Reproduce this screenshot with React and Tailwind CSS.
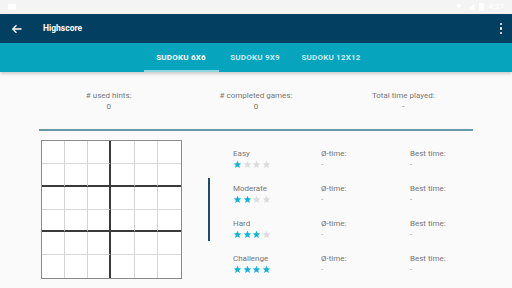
import React from "react";

const STATS = [
  { label: "# used hints:", value: "0" },
  { label: "# completed games:", value: "0" },
  { label: "Total time played:", value: "-" },
];

const LEVELS = [
  { name: "Easy", stars: 1 },
  { name: "Moderate", stars: 2 },
  { name: "Hard", stars: 3 },
  { name: "Challenge", stars: 4 },
];

function Star({ on }) {
  return (
    <svg width="9" height="9" viewBox="0 0 24 24">
      <path
        d="M12 2l2.9 6.9 7.1.6-5.4 4.7 1.6 7.1L12 17.5 5.8 21.3l1.6-7.1L2 9.5l7.1-.6z"
        fill={on ? "#12b4d4" : "#dcdcdc"}
      />
    </svg>
  );
}

function Board() {
  const cells = [];
  for (let r = 0; r < 6; r++) {
    for (let c = 0; c < 6; c++) {
      const right =
        c === 2
          ? "border-r-[2px] border-r-[#3a3a3a]"
          : c < 5
          ? "border-r border-r-[#d4d4d4]"
          : "";
      const bottom =
        r === 1 || r === 3
          ? "border-b-[2px] border-b-[#3a3a3a]"
          : r < 5
          ? "border-b border-b-[#d8d8d8]"
          : "";
      cells.push(<div key={`${r}-${c}`} className={`${right} ${bottom}`} />);
    }
  }
  return (
    <div className="grid h-[139px] w-[141px] shrink-0 grid-cols-6 grid-rows-6 border border-[#8a8a8a] bg-white">
      {cells}
    </div>
  );
}

export default function App() {
  return (
    <div
      className="flex h-[288px] w-[512px] flex-col overflow-hidden bg-[#fafafa]"
      style={{ fontFamily: "Roboto, 'Noto Sans', sans-serif" }}
    >
      {/* status bar */}
      <div className="flex h-[14px] items-center justify-between bg-[#f4f4f4] px-[8px] text-[8px] text-white">
        <div className="h-[6px] w-[8px] rounded-[1px] bg-white" />
        <div className="flex items-center gap-[5px]">
          <span>▼</span>
          <span>◢</span>
          <div className="h-[8px] w-[5px] bg-white" />
          <span>4:27</span>
        </div>
      </div>

      {/* toolbar */}
      <div className="flex h-[29px] items-center bg-[#033f60] pl-[11px] pr-[10px] text-white">
        <svg width="12" height="12" viewBox="0 0 24 24" fill="none" stroke="white" strokeWidth="2.6">
          <path d="M21 12H4M11 4.5L3.5 12l7.5 7.5" />
        </svg>
        <span className="ml-[20px] text-[8.5px] font-bold">Highscore</span>
        <div className="ml-auto flex flex-col gap-[2px]">
          <div className="h-[2.5px] w-[2.5px] rounded-full bg-white" />
          <div className="h-[2.5px] w-[2.5px] rounded-full bg-white" />
          <div className="h-[2.5px] w-[2.5px] rounded-full bg-white" />
        </div>
      </div>

      {/* tabs */}
      <div className="relative z-10 flex h-[29px] justify-center bg-[#06a4bd] pl-[8px] text-[8px] font-bold tracking-[0.2px] shadow-[0_2px_3px_rgba(0,0,0,0.18)]">
        <div className="relative flex w-[74px] items-center justify-center text-white">
          SUDOKU 6X6
          <div className="absolute bottom-0 left-0 h-[2px] w-[75px] bg-[#8fd6e2]" />
        </div>
        <div className="flex w-[74px] items-center justify-center text-[#c8ecf2]">SUDOKU 9X9</div>
        <div className="flex w-[84px] items-center justify-center pr-[6px] text-[#c8ecf2]">SUDOKU 12X12</div>
      </div>

      {/* stats */}
      <div className="grid grid-cols-3 px-[35px] pt-[18px] text-[8px] leading-[11px] text-[#777777]">
        {STATS.map((s) => (
          <div key={s.label} className="flex flex-col items-center">
            <span>{s.label}</span>
            <span>{s.value}</span>
          </div>
        ))}
      </div>

      <div className="mx-[39px] mt-[17px] h-[2px] bg-[#6b97a4]" />

      {/* board + levels */}
      <div className="flex pl-[41px] pt-[9px]">
        <Board />
        <div className="relative ml-[26px] flex flex-col pt-[8px] text-[8px] text-[#777777]">
          <div className="absolute left-0 top-[38px] h-[63px] w-[1.5px] bg-[#1c4c6b]" />
          {LEVELS.map((l) => (
            <div key={l.name} className="flex h-[35px] pl-[25px]">
              <div className="flex w-[88px] flex-col">
                <span className="leading-[11px]">{l.name}</span>
                <div className="mt-[1px] flex gap-[0.5px]">
                  {[0, 1, 2, 3].map((i) => (
                    <Star key={i} on={i < l.stars} />
                  ))}
                </div>
              </div>
              <div className="flex w-[89px] flex-col leading-[11px]">
                <span>Ø-time:</span>
                <span className="text-[#a0a0a0]">-</span>
              </div>
              <div className="flex flex-col leading-[11px]">
                <span>Best time:</span>
                <span className="text-[#a0a0a0]">-</span>
              </div>
            </div>
          ))}
        </div>
      </div>
    </div>
  );
}
